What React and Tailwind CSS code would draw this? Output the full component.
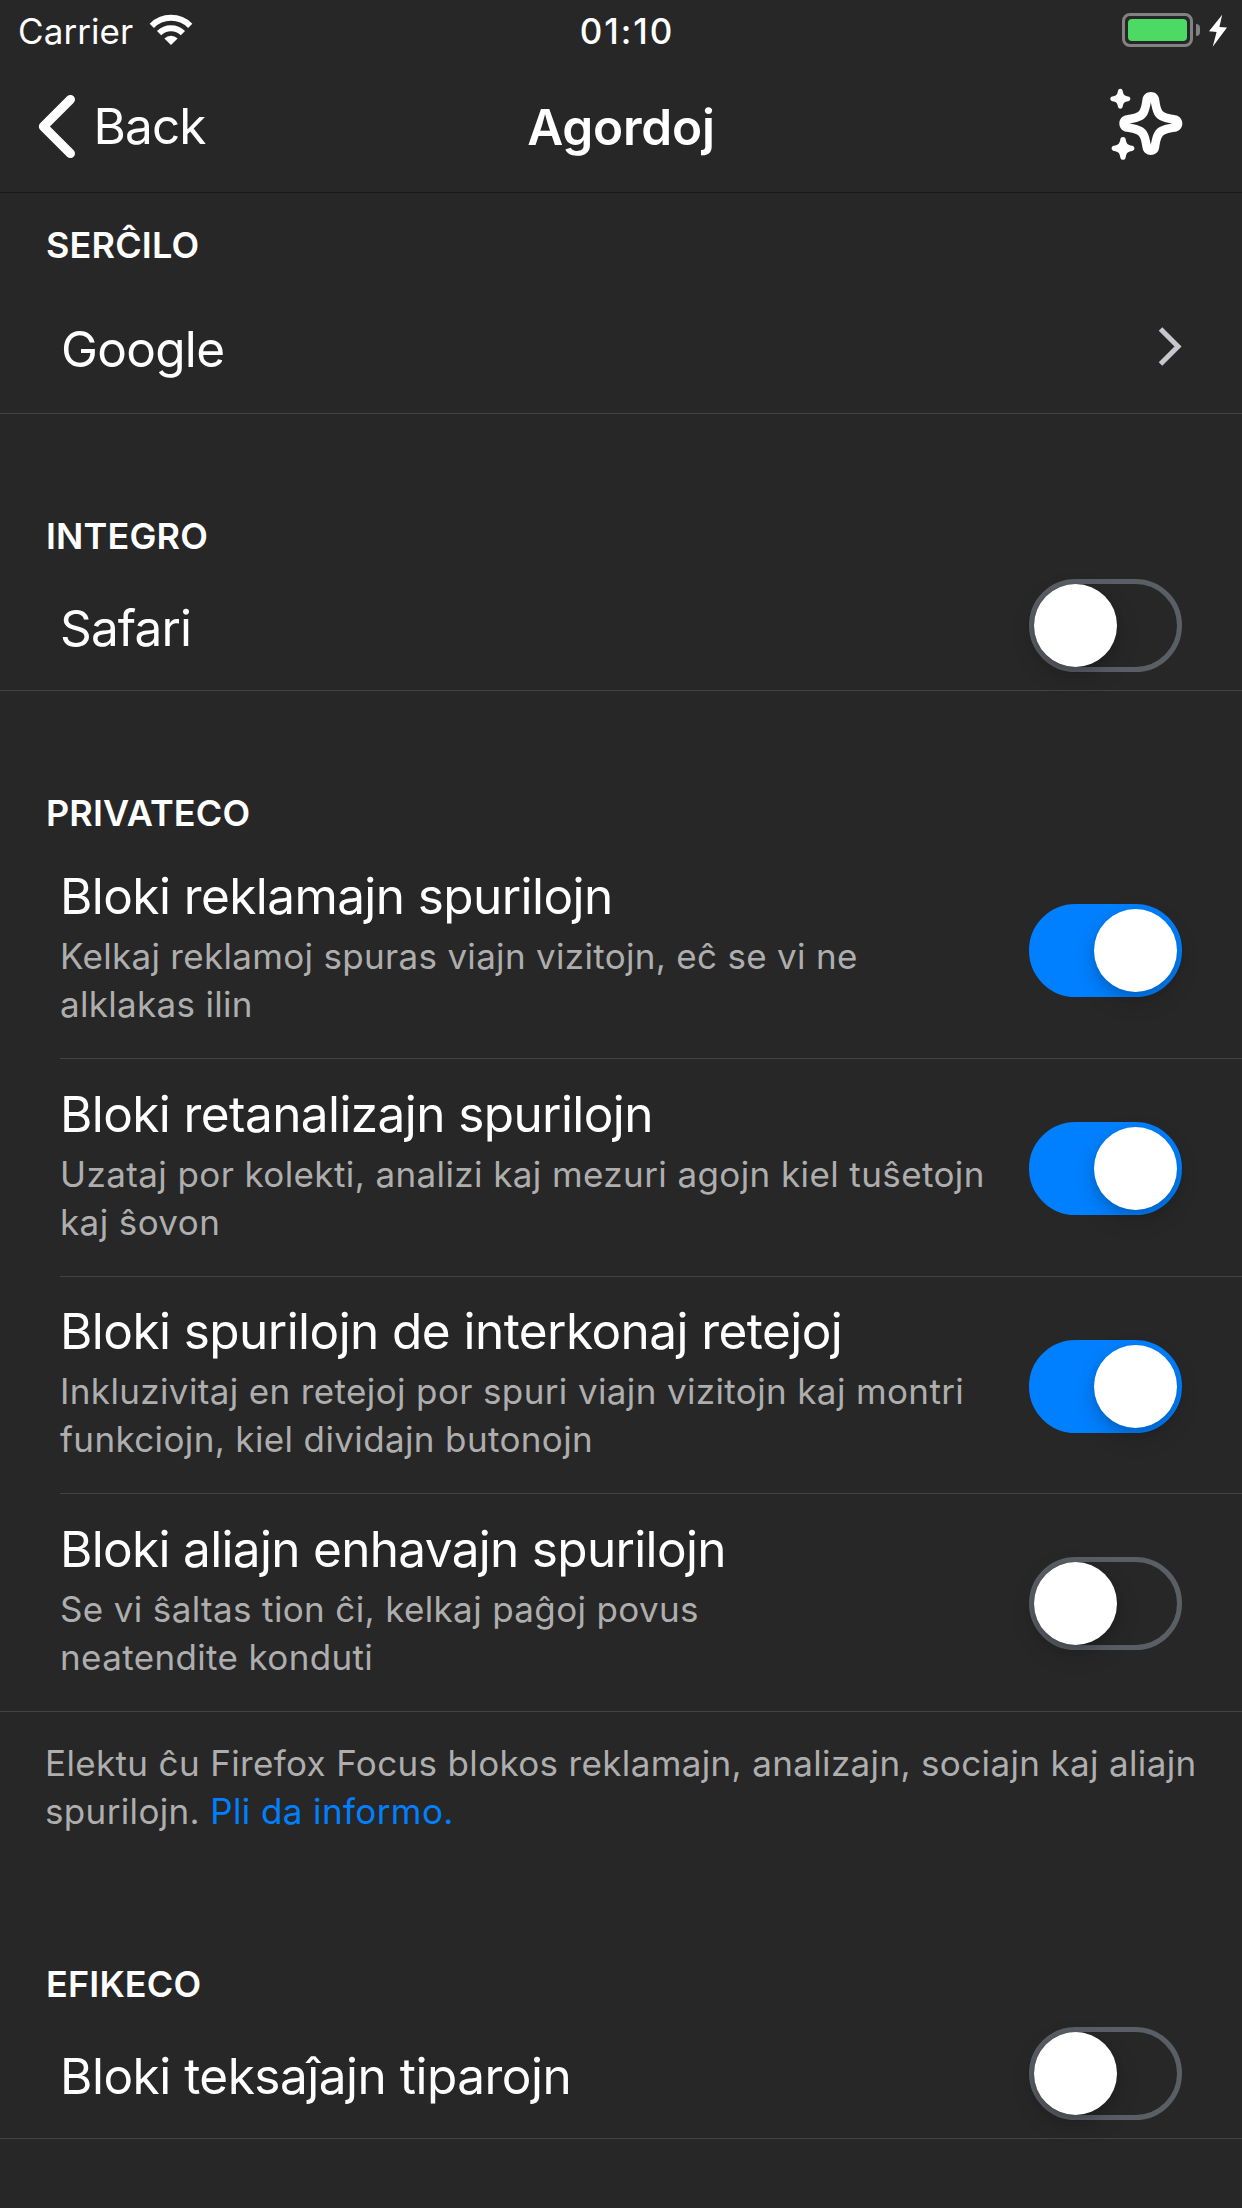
import React from "react";

function Wifi() {
  return (
    <svg className="mt-[14px] ml-[16px] h-[32px] w-[44px]" viewBox="0 0 44 32" fill="none">
      <path d="M2.8 11.8A27.2 27.2 0 0 1 41.2 11.8" stroke="#fff" strokeWidth="6" />
      <path d="M10.1 19.1A16.8 16.8 0 0 1 33.9 19.1" stroke="#fff" strokeWidth="6" />
      <path d="M22 31L15.4 24.4A9.3 9.3 0 0 1 28.6 24.4Z" fill="#fff" />
    </svg>
  );
}

function Battery() {
  return (
    <div className="flex">
      <div className="mt-[13px] h-[34px] w-[71px] rounded-[8px] border-[3px] border-[#828282] p-[3px]">
        <div className="h-full w-full rounded-[4px] bg-[#4cd964]" />
      </div>
      <div className="mt-[24px] ml-[3px] h-[12px] w-[4px] rounded-r-full bg-[#828282]" />
      <svg className="mt-[14px] ml-[8px] h-[34px] w-[20px]" viewBox="0 0 20 34">
        <path d="M14.2 0.8L1 17.3L8.6 18L4.7 32.8L19 13.6L11.4 13Z" fill="#fff" />
      </svg>
    </div>
  );
}

const SPARK =
  "M0-30C4-30 6-28 7-24C9-12 12-9 24-7C28-6 30-4 30 0C30 4 28 6 24 7C12 9 9 12 7 24C6 28 4 30 0 30C-4 30-6 28-7 24C-9 12-12 9-24 7C-28 6-30 4-30 0C-30-4-28-6-24-7C-12-9-9-12-7-24C-6-28-4-30 0-30Z";

function Sparkles() {
  return (
    <svg className="mt-[25px] mr-[55.3px] h-[80px] w-[80px] justify-self-end" viewBox="140 255 240 240" fill="#fff">
      <path
        transform="translate(271.5 370.5)"
        fillRule="evenodd"
        d="M0-94.5C13-94.5 23-86 25-73C28-54 30-43 37-36C44-30 54-28 73-25C86-23 94.5-13 94.5 0C94.5 13 86 23 73 25C54 28 44 30 37 36C30 43 28 54 25 73C23 86 13 94.5 0 94.5C-13 94.5-23 86-25 73C-28 54-30 43-37 36C-44 30-54 28-73 25C-86 23-94.5 13-94.5 0C-94.5-13-86-23-73-25C-54-28-44-30-37-36C-30-43-28-54-25-73C-23-86-13-94.5 0-94.5Z M0-64C-4-42-8-27-17-18C-27-8-42-4-64 0C-42 4-27 8-17 18C-8 27-4 42 0 64C4 42 8 27 17 18C27 8 42 4 64 0C42-4 27-8 17-18C8-27 4-42 0-64Z"
      />
      <path transform="translate(180 296.5)" d={SPARK} />
      <path transform="translate(188 445) scale(1.14)" d={SPARK} />
    </svg>
  );
}

function Toggle({ on, className }) {
  return (
    <div
      className={`flex h-[93px] w-[153px] shrink-0 rounded-full border-[5px] ${
        on ? "justify-end border-[#0080ff] bg-[#0080ff]" : "justify-start border-[#5a5f66]"
      } ${className}`}
    >
      <div className="size-[83px] rounded-full bg-white shadow-[0_9px_24px_rgba(0,0,0,0.16),0_4px_8px_rgba(0,0,0,0.12)]" />
    </div>
  );
}

function Heading({ children, className }) {
  return (
    <h2 className={`pl-[46px] text-[36px] leading-[48px] font-semibold tracking-[0.15px] ${className}`}>
      {children}
    </h2>
  );
}

function SimpleRow({ label, className }) {
  return (
    <div className="flex h-[131px] items-start justify-between border-b border-[#434345] pr-[60px] pl-[60px]">
      <span className={`mt-[38px] text-[49.5px] leading-[60px] ${className}`}>{label}</span>
      <Toggle className="mt-[19px]" />
    </div>
  );
}

const TRACKERS = [
  {
    title: "Bloki reklamajn spurilojn",
    lines: ["Kelkaj reklamoj spuras viajn vizitojn, eĉ se vi ne", "alklakas ilin"],
    on: true,
    row: "ml-[60px] h-[222px]",
    text: "pt-[29px] tracking-[-0.58px]",
    note: "tracking-[0.31px]",
    toggle: "mt-[67px]",
  },
  {
    title: "Bloki retanalizajn spurilojn",
    lines: ["Uzataj por kolekti, analizi kaj mezuri agojn kiel tuŝetojn", "kaj ŝovon"],
    on: true,
    row: "ml-[60px] h-[218px]",
    text: "pt-[25px] tracking-[-0.59px]",
    note: "tracking-[0.4px]",
    toggle: "mt-[63px]",
  },
  {
    title: "Bloki spurilojn de interkonaj retejoj",
    lines: ["Inkluzivitaj en retejoj por spuri viajn vizitojn kaj montri", "funkciojn, kiel dividajn butonojn"],
    on: true,
    row: "ml-[60px] h-[217px]",
    text: "pt-[24px] tracking-[-0.56px]",
    note: "tracking-[0.37px]",
    toggle: "mt-[63px]",
  },
  {
    title: "Bloki aliajn enhavajn spurilojn",
    lines: ["Se vi ŝaltas tion ĉi, kelkaj paĝoj povus", "neatendite konduti"],
    on: false,
    row: "pl-[60px] h-[218px]",
    text: "pt-[25px] tracking-[-0.68px]",
    note: "tracking-[0.36px]",
    toggle: "mt-[63px]",
  },
];

export default function App() {
  return (
    <div className="h-[2208px] w-[1242px] overflow-hidden bg-[#272727] font-['Inter',sans-serif] text-white">
      <div className="grid h-[60px] grid-cols-[1fr_auto_1fr] items-start text-[35px] leading-[48px]">
        <div className="flex items-start pl-[18px]">
          <span className="mt-[7px] tracking-[0.08px]">Carrier</span>
          <Wifi />
        </div>
        <span className="mt-[7px] pl-[12px] font-medium tracking-[1.9px]">01:10</span>
        <div className="flex justify-end pr-[14px]">
          <Battery />
        </div>
      </div>

      <header className="grid h-[133px] grid-cols-[1fr_auto_1fr] items-start border-b border-[#1a1a1a] text-[49.5px] leading-[60px]">
        <div className="flex items-start">
          <svg className="mt-[34px] ml-[36px] h-[65px] w-[42px]" viewBox="0 0 42 65" fill="none">
            <path d="M34.4 5.5L7.4 32.5L34.4 59.5" stroke="#fff" strokeWidth="9.2" strokeLinecap="round" strokeLinejoin="round" />
          </svg>
          <span className="mt-[36px] ml-[15.5px] tracking-[-0.9px]">Back</span>
        </div>
        <h1 className="mt-[37px] font-semibold tracking-[-0.2px]">Agordoj</h1>
        <Sparkles />
      </header>

      <section>
        <Heading className="pt-[28px]">SERĈILO</Heading>
        <div className="flex h-[145px] items-start justify-between border-b border-[#434345] pr-[59px] pl-[61px]">
          <span className="mt-[50px] text-[49.5px] leading-[60px] tracking-[-0.7px]">Google</span>
          <svg className="mt-[57px] h-[41px] w-[26px]" viewBox="0 0 26 41" fill="none">
            <path d="M3.5 3L21 20.5L3.5 38" stroke="#c7c7cc" strokeWidth="5" />
          </svg>
        </div>
      </section>

      <section>
        <Heading className="pt-[98px]">INTEGRO</Heading>
        <SimpleRow label="Safari" className="tracking-[-0.85px]" />
      </section>

      <section>
        <Heading className="pt-[98px]">PRIVATECO</Heading>
        {TRACKERS.map((t) => (
          <div key={t.title} className={`flex items-start justify-between border-b border-[#434345] pr-[60px] ${t.row}`}>
            <div className={`whitespace-nowrap ${t.text}`}>
              <div className="text-[49.5px] leading-[60px]">{t.title}</div>
              <div className={`mt-[6px] text-[35px] leading-[48px] text-[#aeaeae] ${t.note}`}>
                {t.lines[0]}
                <br />
                {t.lines[1]}
              </div>
            </div>
            <Toggle on={t.on} className={t.toggle} />
          </div>
        ))}
        <p className="pt-[27px] pl-[45px] text-[35px] leading-[48px] tracking-[0.35px] whitespace-nowrap text-[#aeaeae]">
          Elektu ĉu Firefox Focus blokos reklamajn, analizajn, sociajn kaj aliajn
          <br />
          spurilojn. <a className="tracking-[0.4px] text-[#0080ff]">Pli da informo.</a>
        </p>
      </section>

      <section>
        <Heading className="pt-[125px]">EFIKECO</Heading>
        <SimpleRow label="Bloki teksaĵajn tiparojn" className="tracking-[-0.5px]" />
      </section>
    </div>
  );
}
